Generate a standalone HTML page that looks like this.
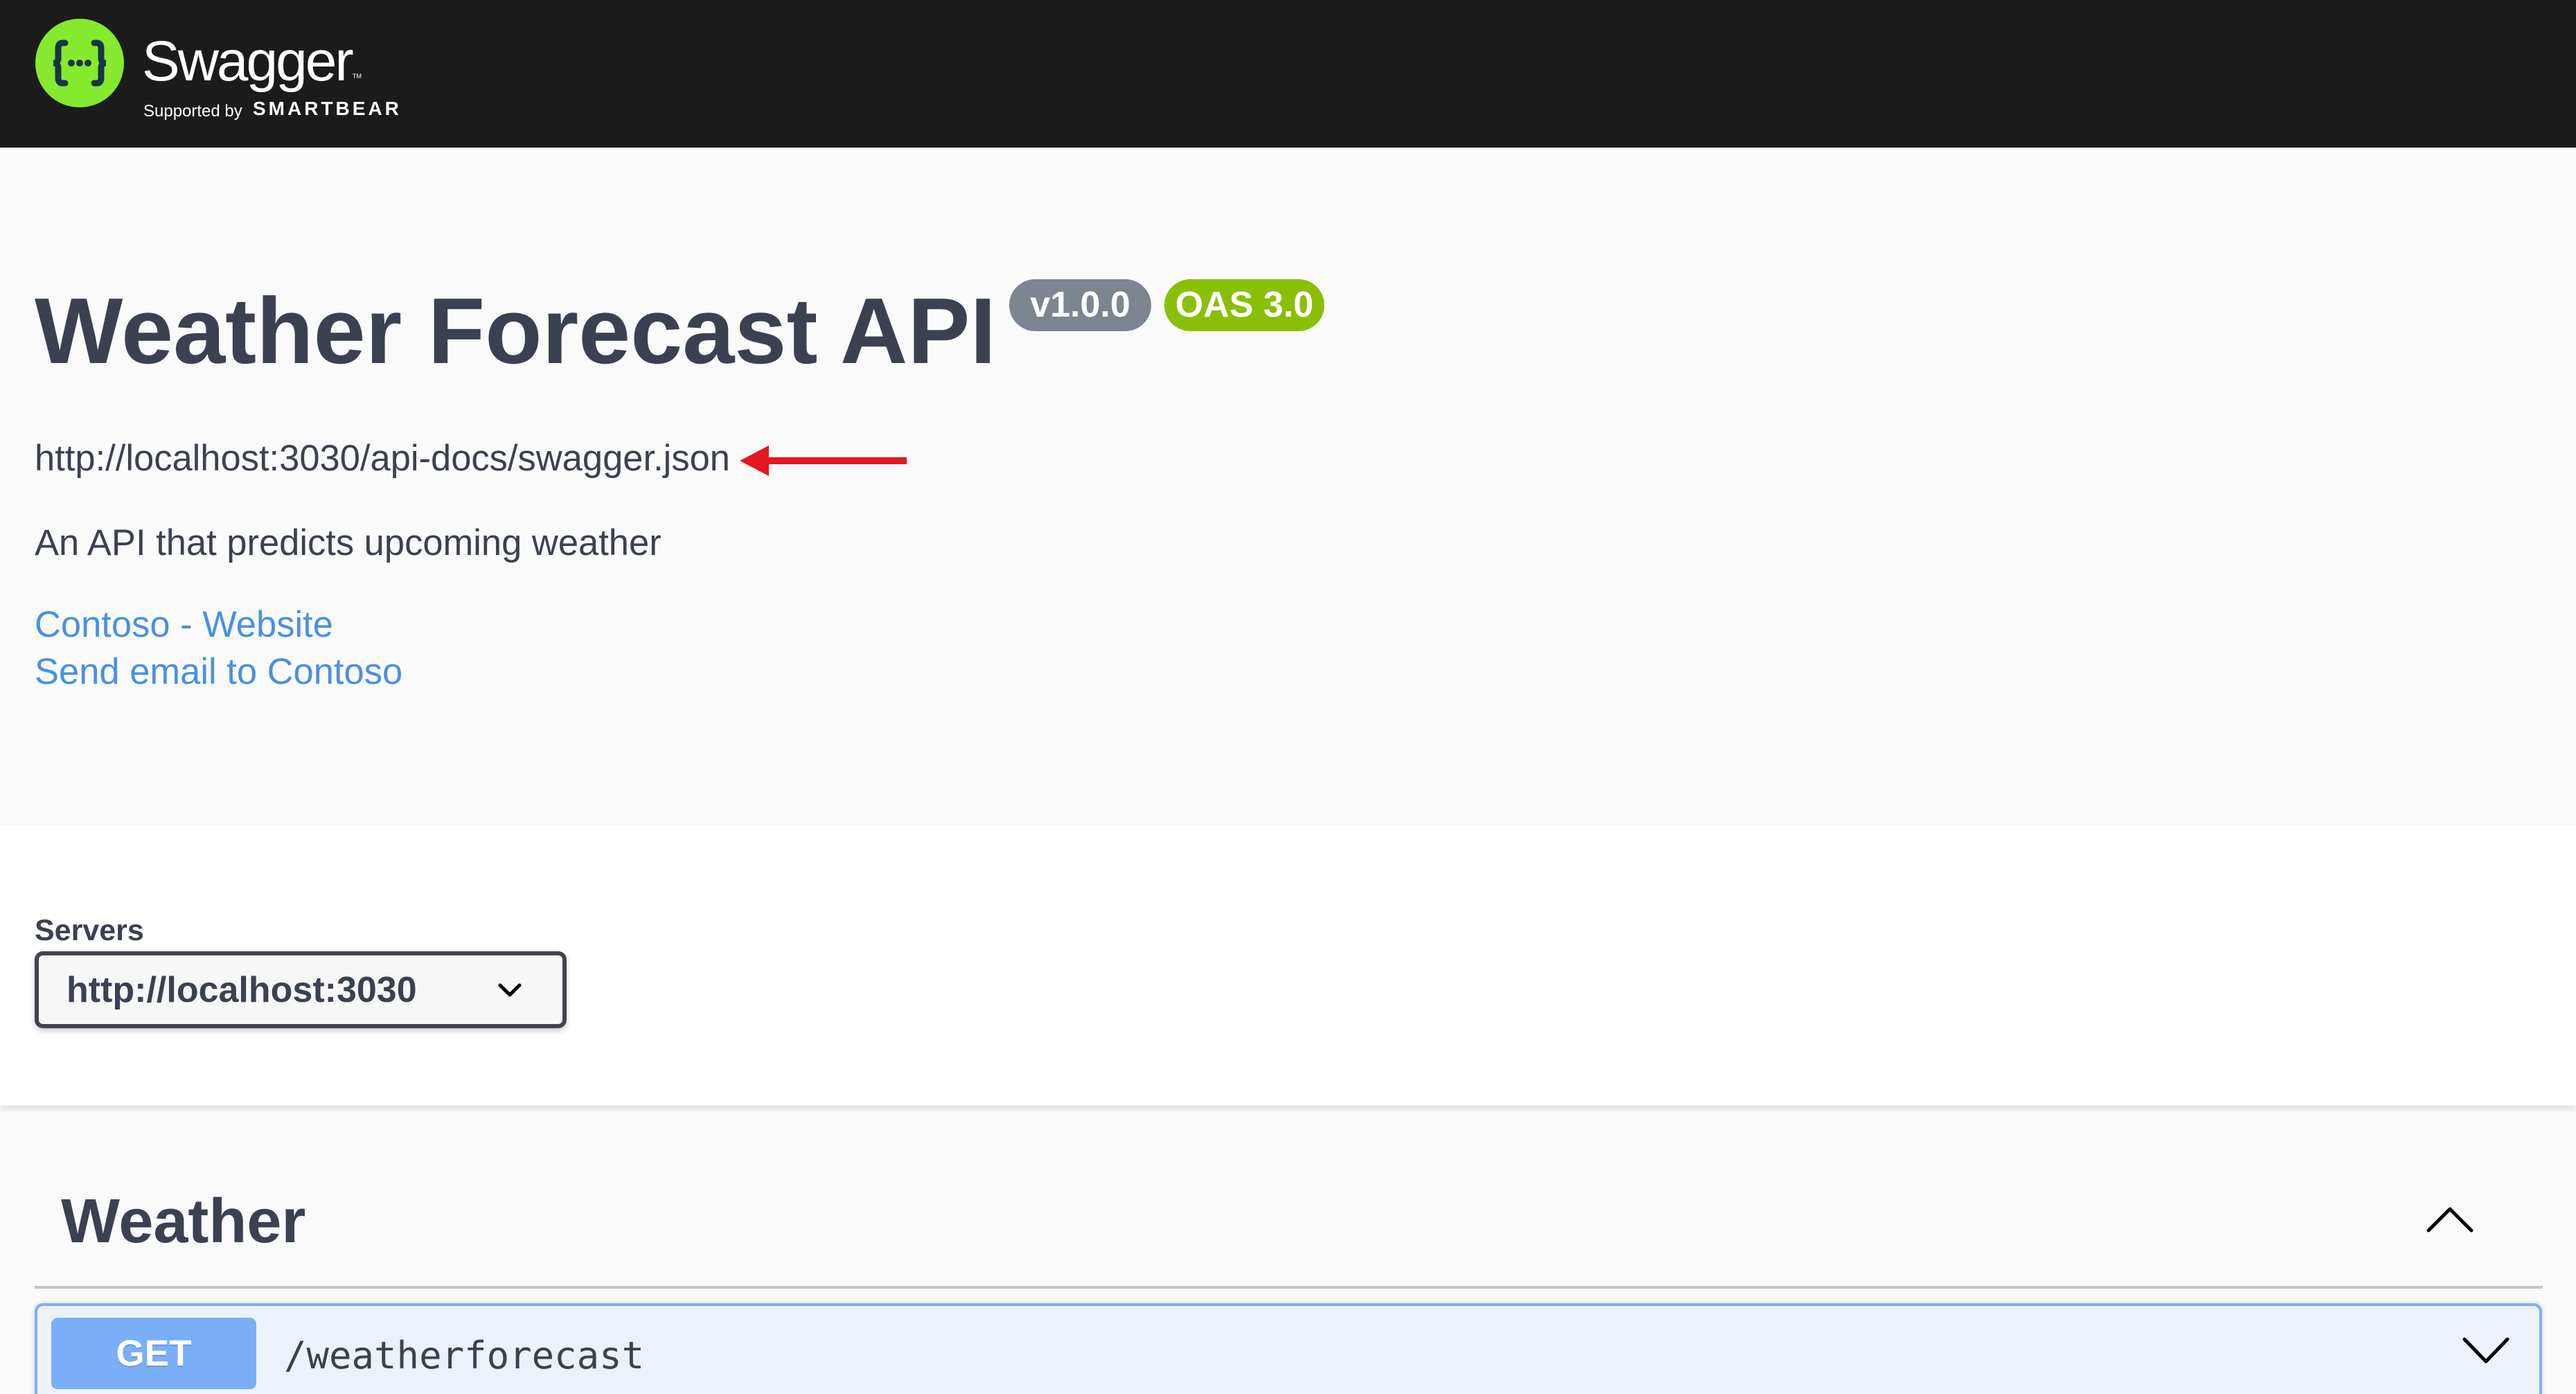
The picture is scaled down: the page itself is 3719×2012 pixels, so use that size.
<!DOCTYPE html>
<html><head><meta charset="utf-8"><style>
*{margin:0;padding:0;box-sizing:border-box}
html,body{width:3719px;height:2012px;overflow:hidden}
body{background:#fafafa;font-family:"Liberation Sans",Arial,sans-serif;color:#3b4151}
#w{position:relative;width:3719px;height:2012px;overflow:hidden}
.a{position:absolute;line-height:1;white-space:nowrap}
</style></head><body><div id="w">
<div class="a" style="left:0;top:0;width:3719px;height:213px;background:#1b1b1b"></div>
<svg class="a" style="left:48px;top:26px" width="134" height="130" viewBox="0 0 134 130">
<circle cx="67" cy="65" r="64" fill="#85ea2d"/>
<g fill="none" stroke="#173647" stroke-width="9" stroke-linecap="round">
<path d="M46 36 h-4 q-6 0 -6 8 v14 q0 7 -7 7 q7 0 7 7 v14 q0 8 6 8 h4"/>
<path d="M88 36 h4 q6 0 6 8 v14 q0 7 7 7 q-7 0 -7 7 v14 q0 8 -6 8 h-4"/>
</g>
<circle cx="55" cy="65" r="5" fill="#173647"/><circle cx="67" cy="65" r="5" fill="#173647"/><circle cx="79" cy="65" r="5" fill="#173647"/>
</svg>
<div class="a" style="left:205px;top:48px;font-size:82px;color:#fff;letter-spacing:-3px">Swagger</div>
<div class="a" style="left:509px;top:106px;font-size:9px;color:#fff">TM</div>
<div class="a" style="left:207px;top:149px;font-size:24px;color:#fff">Supported by</div>
<div class="a" style="left:365px;top:143px;font-size:28px;color:#fff;letter-spacing:4px;font-weight:bold">SMARTBEAR</div>

<div class="a" style="left:50px;top:410px;font-size:135px;font-weight:bold">Weather Forecast API</div>
<div class="a" style="left:1457px;top:403px;width:205px;height:75px;border-radius:38px;background:#7d8492;color:#fff;font-weight:bold;font-size:52px;line-height:75px;text-align:center">v1.0.0</div>
<div class="a" style="left:1681px;top:403px;width:231px;height:75px;border-radius:38px;background:#89bf04;color:#fff;font-weight:bold;font-size:52px;line-height:75px;text-align:center">OAS 3.0</div>

<div class="a" style="left:50px;top:636px;font-size:52.5px">http://localhost:3030/api-docs/swagger.json</div>
<svg class="a" style="left:1060px;top:640px" width="260" height="50"><path d="M8 25 L50 3 L50 47 Z" fill="#e2191e"/><rect x="45" y="20" width="204" height="10" fill="#e2191e"/></svg>
<div class="a" style="left:50px;top:758px;font-size:52.5px">An API that predicts upcoming weather</div>
<div class="a" style="left:50px;top:876px;font-size:52.5px;color:#4990e2">Contoso - Website</div>
<div class="a" style="left:50px;top:944px;font-size:52.5px;color:#4990e2">Send email to Contoso</div>

<div class="a" style="left:0;top:1191px;width:3719px;height:405px;background:#fff;box-shadow:0 4px 8px rgba(0,0,0,.12)"></div>
<div class="a" style="left:50px;top:1322px;font-size:43px;font-weight:bold">Servers</div>
<div class="a" style="left:50px;top:1373px;width:768px;height:111px;border:6px solid #41444e;border-radius:12px;background:#f7f7f7;box-shadow:0 4px 8px rgba(0,0,0,.2)"></div>
<div class="a" style="left:96px;top:1403px;font-size:52px;font-weight:bold">http://localhost:3030</div>
<svg class="a" style="left:716px;top:1414px" width="40" height="30"><path d="M6 8 L20 22 L34 8" fill="none" stroke="#000" stroke-width="5" stroke-linecap="round" stroke-linejoin="round"/></svg>

<div class="a" style="left:88px;top:1718px;font-size:90px;font-weight:bold">Weather</div>
<svg class="a" style="left:3496px;top:1735px" width="84" height="50"><path d="M10 41 L41 10 L72 41" fill="none" stroke="#000" stroke-width="5" stroke-linecap="round" stroke-linejoin="round"/></svg>
<div class="a" style="left:50px;top:1856px;width:3621px;height:4px;background:#c4c4c8"></div>
<div class="a" style="left:50px;top:1881px;width:3620px;height:220px;border:4px solid #7ab0f7;border-radius:12px;background:#edf2fa;box-shadow:0 0 8px rgba(0,0,0,.15)"></div>
<div class="a" style="left:74px;top:1902px;width:296px;height:103px;border-radius:9px;background:#7aaff8;color:#fff;font-weight:bold;font-size:53px;line-height:103px;text-align:center;text-shadow:0 2px 0 rgba(0,0,0,.15)">GET</div>
<div class="a" style="left:410px;top:1930px;font-size:54px;font-family:'DejaVu Sans Mono','Liberation Mono',monospace">/weatherforecast</div>
<svg class="a" style="left:3548px;top:1922px" width="84" height="56"><path d="M10 11 L41 43 L72 11" fill="none" stroke="#000" stroke-width="5" stroke-linecap="round" stroke-linejoin="round"/></svg>
</div></body></html>
